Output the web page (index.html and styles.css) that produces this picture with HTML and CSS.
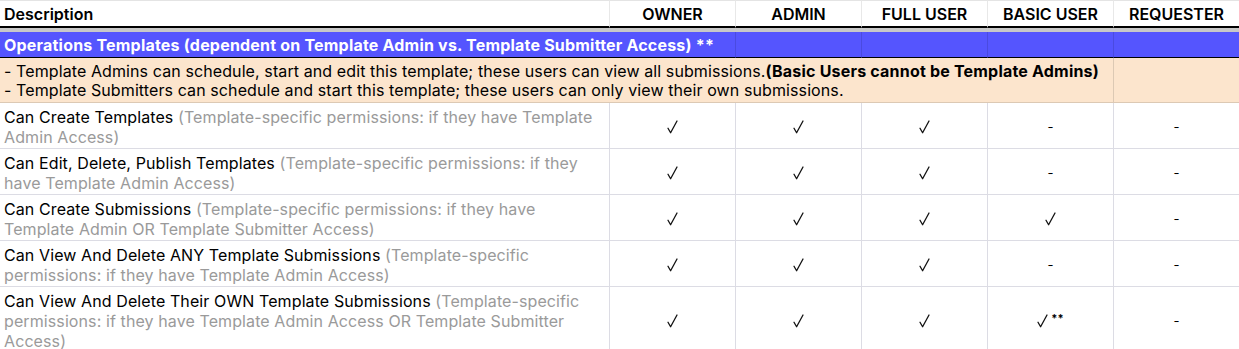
FILE: index.html
```html
<!DOCTYPE html>
<html>
<head>
<meta charset="utf-8">
<link rel="stylesheet" href="styles.css">
</head>
<body>
<div class="sheet">
  <div class="cell head desc">Description</div>
  <div class="cell head">OWNER</div>
  <div class="cell head">ADMIN</div>
  <div class="cell head">FULL USER</div>
  <div class="cell head">BASIC USER</div>
  <div class="cell head last">REQUESTER</div>
  <div class="freeze"></div>

  <div class="cell section title">Operations Templates (dependent on Template Admin vs. Template Submitter Access) **</div>
  <div class="cell section"></div>
  <div class="cell section"></div>
  <div class="cell section"></div>
  <div class="cell section last"></div>

  <div class="cell note wide"><p>- Template Admins can schedule, start and edit this template; these users can view all submissions.<b>(Basic Users cannot be Template Admins)</b></p><p>- Template Submitters can schedule and start this template; these users can only view their own submissions.</p></div>
  <div class="cell note last"></div>

  <div class="cell label"><p>Can Create Templates <span class="muted">(Template-specific permissions: if they have Template Admin Access)</span></p></div>
  <div class="cell mark"><svg class="tick" viewBox="0 0 11 14"><path d="M1 8.2 L3.6 12.8 L10 1"/></svg></div>
  <div class="cell mark"><svg class="tick" viewBox="0 0 11 14"><path d="M1 8.2 L3.6 12.8 L10 1"/></svg></div>
  <div class="cell mark"><svg class="tick" viewBox="0 0 11 14"><path d="M1 8.2 L3.6 12.8 L10 1"/></svg></div>
  <div class="cell mark"><span class="dash">-</span></div>
  <div class="cell mark last"><span class="dash">-</span></div>

  <div class="cell label"><p>Can Edit, Delete, Publish Templates <span class="muted">(Template-specific permissions: if they have Template Admin Access)</span></p></div>
  <div class="cell mark"><svg class="tick" viewBox="0 0 11 14"><path d="M1 8.2 L3.6 12.8 L10 1"/></svg></div>
  <div class="cell mark"><svg class="tick" viewBox="0 0 11 14"><path d="M1 8.2 L3.6 12.8 L10 1"/></svg></div>
  <div class="cell mark"><svg class="tick" viewBox="0 0 11 14"><path d="M1 8.2 L3.6 12.8 L10 1"/></svg></div>
  <div class="cell mark"><span class="dash">-</span></div>
  <div class="cell mark last"><span class="dash">-</span></div>

  <div class="cell label"><p>Can Create Submissions <span class="muted">(Template-specific permissions: if they have Template Admin OR Template Submitter Access)</span></p></div>
  <div class="cell mark"><svg class="tick" viewBox="0 0 11 14"><path d="M1 8.2 L3.6 12.8 L10 1"/></svg></div>
  <div class="cell mark"><svg class="tick" viewBox="0 0 11 14"><path d="M1 8.2 L3.6 12.8 L10 1"/></svg></div>
  <div class="cell mark"><svg class="tick" viewBox="0 0 11 14"><path d="M1 8.2 L3.6 12.8 L10 1"/></svg></div>
  <div class="cell mark"><svg class="tick" viewBox="0 0 11 14"><path d="M1 8.2 L3.6 12.8 L10 1"/></svg></div>
  <div class="cell mark last"><span class="dash">-</span></div>

  <div class="cell label"><p>Can View And Delete ANY Template Submissions <span class="muted">(Template-specific permissions: if they have Template Admin Access)</span></p></div>
  <div class="cell mark"><svg class="tick" viewBox="0 0 11 14"><path d="M1 8.2 L3.6 12.8 L10 1"/></svg></div>
  <div class="cell mark"><svg class="tick" viewBox="0 0 11 14"><path d="M1 8.2 L3.6 12.8 L10 1"/></svg></div>
  <div class="cell mark"><svg class="tick" viewBox="0 0 11 14"><path d="M1 8.2 L3.6 12.8 L10 1"/></svg></div>
  <div class="cell mark"><span class="dash">-</span></div>
  <div class="cell mark last"><span class="dash">-</span></div>

  <div class="cell label"><p>Can View And Delete Their OWN Template Submissions <span class="muted">(Template-specific permissions: if they have Template Admin Access OR Template Submitter Access)</span></p></div>
  <div class="cell mark"><svg class="tick" viewBox="0 0 11 14"><path d="M1 8.2 L3.6 12.8 L10 1"/></svg></div>
  <div class="cell mark"><svg class="tick" viewBox="0 0 11 14"><path d="M1 8.2 L3.6 12.8 L10 1"/></svg></div>
  <div class="cell mark"><svg class="tick" viewBox="0 0 11 14"><path d="M1 8.2 L3.6 12.8 L10 1"/></svg></div>
  <div class="cell mark"><svg class="tick" viewBox="0 0 11 14"><path d="M1 8.2 L3.6 12.8 L10 1"/></svg><span class="stars">**</span></div>
  <div class="cell mark last"><span class="dash">-</span></div>
</div>
</body>
</html>
```
FILE: styles.css
```css
html, body {
  margin: 0;
  padding: 0;
  background: #fff;
}
body {
  font-family: Inter, "Liberation Sans", sans-serif;
  font-size: 16px;
  letter-spacing: 0.1px;
  color: #000;
  overflow: hidden;
}
p {
  margin: 0;
}
.sheet {
  display: grid;
  grid-template-columns: 610px 126px 126px 126px 126px 1fr;
  width: 1239px;
}
.cell {
  box-sizing: border-box;
  border-right: 1px solid #dcdce4;
  border-bottom: 1px solid #dcdce4;
  min-width: 0;
}
.cell.last {
  border-right: none;
}
.head {
  height: 28px;
  border-top: 1px solid #e4e4e4;
  border-right-color: #e8e8e8;
  border-bottom: 2px solid #000;
  font-weight: 600;
  letter-spacing: 0;
  display: flex;
  align-items: center;
  justify-content: center;
  padding-top: 1px;
}
.head.desc {
  justify-content: flex-start;
  padding-left: 4px;
}
.freeze {
  grid-column: 1 / -1;
  height: 4px;
  background: #c8c8c8;
}
.section {
  height: 26px;
  background: #5555fe;
  border-bottom: 1px solid #000;
  border-right-color: #4a4ae0;
}
.section.title {
  grid-column: span 2;
  color: #fff;
  font-weight: 700;
  letter-spacing: 0.2px;
  padding-left: 4px;
  display: flex;
  align-items: center;
  white-space: nowrap;
}
.note {
  height: 45px;
  background: #fce5cd;
  border-bottom-color: #dcc9b4;
  border-right-color: #dcc9b4;
  line-height: 19px;
  padding: 4px 4px 0;
}
.note b {
  font-weight: 700;
  letter-spacing: 0.2px;
}
.note.wide {
  grid-column: span 5;
}
.label {
  padding: 4px 8px 1px 4px;
  line-height: 20px;
}
.muted {
  color: #9a9a9a;
}
.mark {
  display: flex;
  align-items: center;
  justify-content: center;
  padding-top: 3px;
}
.tick {
  width: 11px;
  height: 14px;
  fill: none;
  stroke: #111;
  stroke-width: 1.3;
  stroke-linecap: round;
  stroke-linejoin: round;
}
.dash {
  font-size: 13px;
  line-height: 1;
}
.stars {
  font-size: 11px;
  font-weight: 700;
  margin-left: 3px;
  margin-top: -7px;
}
```
